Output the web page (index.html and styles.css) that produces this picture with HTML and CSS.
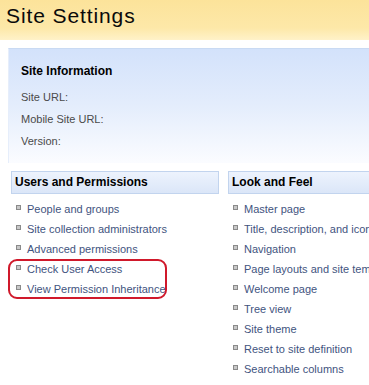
FILE: index.html
```html
<!DOCTYPE html>
<html>
<head>
<meta charset="utf-8">
<title>Site Settings</title>
<link rel="stylesheet" href="styles.css">
</head>
<body>
<header class="header">
  <h1 class="title">Site Settings</h1>
</header>
<main class="page">
  <section class="info">
    <h2 class="info-title">Site Information</h2>
    <div class="info-row">Site URL:</div>
    <div class="info-row">Mobile Site URL:</div>
    <div class="info-row">Version:</div>
  </section>
  <div class="columns">
    <div class="col">
      <h3 class="col-head">Users and Permissions</h3>
      <ul class="links">
        <li><a href="#">People and groups</a></li>
        <li><a href="#">Site collection administrators</a></li>
        <li><a href="#">Advanced permissions</a></li>
        <li><a href="#">Check User Access</a></li>
        <li><a href="#">View Permission Inheritance</a></li>
      </ul>
      <div class="highlight"></div>
    </div>
    <div class="col">
      <h3 class="col-head">Look and Feel</h3>
      <ul class="links">
        <li><a href="#">Master page</a></li>
        <li><a href="#">Title, description, and icon</a></li>
        <li><a href="#">Navigation</a></li>
        <li><a href="#">Page layouts and site templates</a></li>
        <li><a href="#">Welcome page</a></li>
        <li><a href="#">Tree view</a></li>
        <li><a href="#">Site theme</a></li>
        <li><a href="#">Reset to site definition</a></li>
        <li><a href="#">Searchable columns</a></li>
      </ul>
    </div>
  </div>
</main>
</body>
</html>
```
FILE: styles.css
```css
html, body {
  margin: 0;
  padding: 0;
  overflow: hidden;
  background: #ffffff;
}

body {
  font-family: "Liberation Sans", Arial, sans-serif;
  font-size: 11px;
  color: #111;
}

.header {
  height: 40px;
  padding-left: 6px;
  background: linear-gradient(#fce39a 0%, #fde8a8 70%, #fff2c9 100%);
}

.title {
  margin: 0;
  font-size: 21px;
  font-weight: normal;
  line-height: 32px;
  letter-spacing: 0.9px;
  color: #0a0a0a;
}

.page {
  padding: 8px 0 0 8px;
}

.info {
  border-top: 1px solid #c9daf3;
  border-left: 1px solid #e6eefb;
  padding: 11px 0 11px 12px;
  background: linear-gradient(#d3e2fb 0%, #e4edfc 50%, #fbfcff 100%);
}

.info-title {
  margin: 0 0 4px 0;
  font-size: 12px;
  font-weight: bold;
  line-height: 22px;
  color: #000;
}

.info-row {
  line-height: 22px;
  color: #4a4a4a;
}

.columns {
  display: flex;
  gap: 9px;
  margin: 8px 0 0 3px;
  width: 440px;
}

.col {
  position: relative;
  width: 208px;
  flex: none;
}

.col-head {
  margin: 0;
  height: 23px;
  box-sizing: border-box;
  border: 1px solid #c2d4ee;
  padding-left: 3px;
  background: linear-gradient(#edf3fd, #dbe6f8);
  font-size: 12px;
  font-weight: bold;
  line-height: 21px;
  color: #000;
}

.links {
  list-style: none;
  margin: 0;
  padding: 5px 0 0 0;
}

.links li {
  display: flex;
  align-items: center;
  gap: 6px;
  padding-left: 5px;
  height: 20px;
  white-space: nowrap;
}

.links li::before {
  content: "";
  width: 5px;
  height: 5px;
  box-sizing: border-box;
  border: 1px solid #8a8a8a;
  background: #c8c8c8;
  margin-top: -3px;
  flex: none;
}

.links a {
  color: #3f5480;
  text-decoration: none;
}

.highlight {
  position: absolute;
  left: -3px;
  top: 88px;
  width: 159px;
  height: 40px;
  box-sizing: border-box;
  border: 2px solid #d0192b;
  border-radius: 9px;
}
```
